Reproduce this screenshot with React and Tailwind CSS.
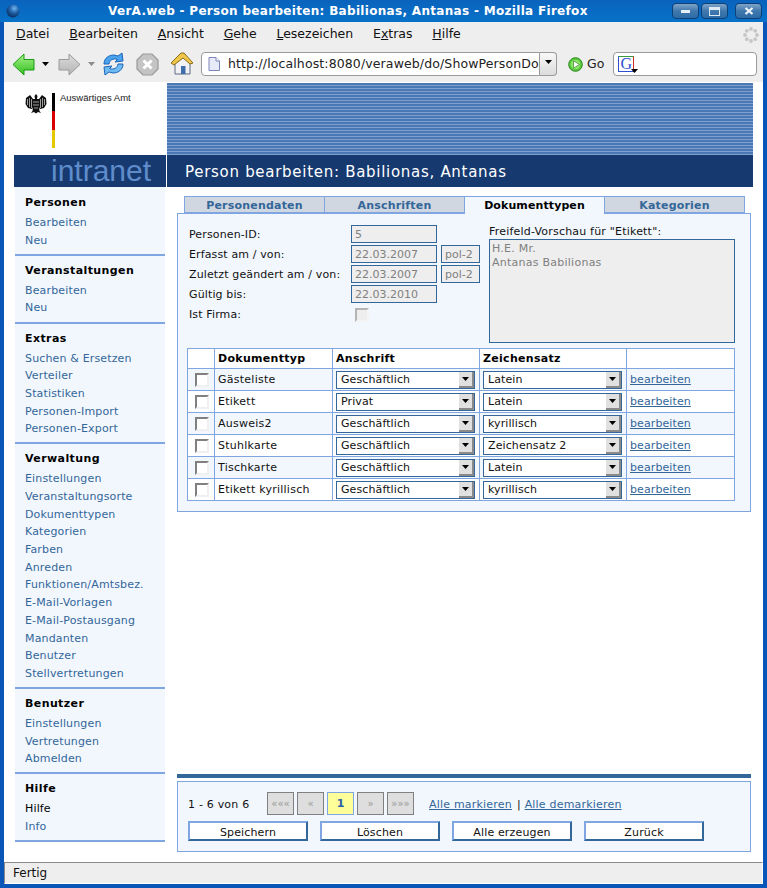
import React from "react";

const FONT = "font-['DejaVu_Sans','Liberation_Sans',sans-serif]";

function Globe() {
  return (
    <svg width="14" height="14" viewBox="0 0 14 14" className="shrink-0">
      <defs>
        <radialGradient id="gl" cx="0.6" cy="0.3" r="0.8">
          <stop offset="0" stopColor="#6fb4f0" />
          <stop offset="0.45" stopColor="#1f5fa8" />
          <stop offset="1" stopColor="#07224a" />
        </radialGradient>
      </defs>
      <circle cx="7" cy="7" r="6.5" fill="url(#gl)" />
    </svg>
  );
}

function WinBtn({ kind, w }) {
  return (
    <div className={`h-[16px] ${w} rounded-[4px] border border-[#0d4079] bg-gradient-to-b from-[#7fa4c8] via-[#3f78ad] to-[#2e6ca6] flex items-center justify-center`}>
      {kind === "min" && <div className="w-[9px] h-[3px] bg-[#e6eef6]" />}
      {kind === "max" && <div className="w-[11px] h-[9px] border border-[#dfe9f3] border-t-[3px]" />}
      {kind === "close" && (
        <svg width="10" height="8" viewBox="0 0 10 8">
          <path d="M1.5 1 L8.5 7 M8.5 1 L1.5 7" stroke="#eef4fa" strokeWidth="2.2" />
        </svg>
      )}
    </div>
  );
}

function Arrow({ dir, id, c1, c2, stroke }) {
  const pts = dir === "left"
    ? "1,11.5 12,1 12,6.5 22,6.5 22,17 12,17 12,22 "
    : "22,11.5 11,1 11,6.5 1,6.5 1,17 11,17 11,22";
  return (
    <svg width="23" height="23" viewBox="0 0 23 23" className="shrink-0">
      <defs>
        <linearGradient id={id} x1="0" y1="0" x2="0" y2="1">
          <stop offset="0" stopColor={c1} />
          <stop offset="1" stopColor={c2} />
        </linearGradient>
      </defs>
      <polygon points={pts} fill={`url(#${id})`} stroke={stroke} strokeWidth="1" strokeLinejoin="round" />
    </svg>
  );
}

function Tri({ color = "#000" }) {
  return (
    <svg width="7" height="4" viewBox="0 0 7 4" className="shrink-0">
      <polygon points="0,0 7,0 3.5,4" fill={color} />
    </svg>
  );
}

function Reload() {
  return (
    <svg width="23" height="24" viewBox="0 0 23 24" className="shrink-0">
      <path d="M2 12 C2 6 7 3 12 3 L16 4 L20 1 L21 9 L13 10 L15.5 7.5 C11 6 7.5 8 7 12 Z" fill="#4aa3ee" stroke="#1b63b8" strokeWidth="1" strokeLinejoin="round" />
      <path d="M21 12 C21 18 16 21 11 21 L7 20 L3 23 L2 15 L10 14 L7.5 16.5 C12 18 15.5 16 16 12 Z" fill="#6fbcf5" stroke="#1b63b8" strokeWidth="1" strokeLinejoin="round" />
    </svg>
  );
}

function Stop() {
  return (
    <svg width="23" height="23" viewBox="0 0 23 23" className="shrink-0">
      <polygon points="7,1 16,1 22,7 22,16 16,22 7,22 1,16 1,7" fill="#c4c4c4" stroke="#999" strokeWidth="1.2" />
      <path d="M7.5 7.5 L15.5 15.5 M15.5 7.5 L7.5 15.5" stroke="#fff" strokeWidth="3" />
    </svg>
  );
}

function Home() {
  return (
    <svg width="24" height="24" viewBox="0 0 24 24" className="shrink-0">
      <path d="M5 11 L5 22 L20 22 L20 11 L13 5 Z" fill="#f2f2f6" stroke="#5d6a80" strokeWidth="1" />
      <rect x="11" y="14" width="4.5" height="8" fill="#3f6fa8" />
      <path d="M1 11 L11 1 L14 1 L23 11 L20 12 L13 6 L4 13 Z" fill="#eec64a" stroke="#8a6d1a" strokeWidth="1" strokeLinejoin="round" />
    </svg>
  );
}

function PageIcon() {
  return (
    <svg width="12" height="14" viewBox="0 0 12 14" className="shrink-0">
      <path d="M1 .5 H8 L11.5 4 V13.5 H1 Z" fill="#e6e9f8" stroke="#7d86b8" strokeWidth="1" />
      <path d="M8 .5 V4 H11.5" fill="#fff" stroke="#7d86b8" strokeWidth="1" />
    </svg>
  );
}

function GoIcon() {
  return (
    <svg width="15" height="15" viewBox="0 0 15 15" className="shrink-0">
      <circle cx="7.5" cy="7.5" r="6.8" fill="#58c63a" stroke="#2a8a1c" strokeWidth="1" />
      <circle cx="7.5" cy="7.5" r="4.8" fill="#8ee46c" />
      <polygon points="5.5,3.8 11.5,7.5 5.5,11.2" fill="#fff" stroke="#2a8a1c" strokeWidth="0.7" />
    </svg>
  );
}

function Spinner() {
  const dots = [[8, 2], [12.2, 3.8], [14, 8], [12.2, 12.2], [8, 14], [3.8, 12.2], [2, 8], [3.8, 3.8]];
  return (
    <svg width="16" height="16" viewBox="0 0 16 16">
      {dots.map(([x, y], i) => <circle key={i} cx={x} cy={y} r="1.9" fill="#c6c6c6" />)}
    </svg>
  );
}

function Eagle() {
  return (
    <svg width="22" height="21" viewBox="0 0 22 21" className="shrink-0">
      <path d="M11 1 L12.5 3 L12 6 L14 6 L17 2 L21 5 L21.5 11 L19 15 L15 16 L14 14 L14.5 18 L16 20 L13 19 L11 20.5 L9 19 L6 20 L7.5 18 L8 14 L7 16 L3 15 L.5 11 L1 5 L5 2 L8 6 L10 6 L9.5 3 Z" fill="#111" />
      <path d="M2.5 6 V12 M4.5 5 V14 M6.5 6 V15 M15.5 6 V15 M17.5 5 V14 M19.5 6 V12 M8 9 H14 M8 12 H14 M9 15 H13" stroke="#fff" strokeWidth="0.6" />
    </svg>
  );
}

function U({ children }) {
  return <span className="underline">{children}</span>;
}

function Chrome() {
  return (
    <>
      <div className="h-[22px] flex items-center bg-gradient-to-b from-[#0a63bd] to-[#0872c8] shrink-0 relative">
        <div className="ml-[6px]"><Globe /></div>
        <div className="flex-1 ml-[88px] text-white font-bold text-[12px] tracking-[0.31px] leading-[22px] whitespace-nowrap">
          VerA.web - Person bearbeiten: Babilionas, Antanas - Mozilla Firefox
        </div>
        <div className="flex items-center gap-[2px] pr-[5px] shrink-0">
          <WinBtn kind="min" w="w-[27px]" />
          <WinBtn kind="max" w="w-[27px]" />
          <div className="w-[3px]" />
          <WinBtn kind="close" w="w-[27px]" />
        </div>
      </div>
      <div className="mx-[4px] bg-[#eeeeee] shrink-0">
        <div className="h-[23px] flex items-center text-[12.5px] text-[#111] pl-[12px] pr-[4px] gap-[19.8px] whitespace-nowrap relative pt-[2px]">
          <span><U>D</U>atei</span>
          <span><U>B</U>earbeiten</span>
          <span><U>A</U>nsicht</span>
          <span><U>G</U>ehe</span>
          <span><U>L</U>esezeichen</span>
          <span>E<U>x</U>tras</span>
          <span><U>H</U>ilfe</span>
          <div className="ml-auto"><Spinner /></div>
        </div>
        <div className="h-[37px] flex items-center text-[12.5px] text-[#222] pl-[8px] whitespace-nowrap pt-[1px]">
          <Arrow dir="left" id="ag" c1="#a8f08a" c2="#2fc01e" stroke="#1c9a12" />
          <div className="ml-[7px]"><Tri /></div>
          <div className="ml-[9px]"><Arrow dir="right" id="ar" c1="#dcdcdc" c2="#b4b4b4" stroke="#9a9a9a" /></div>
          <div className="ml-[7px]"><Tri color="#8a8a8a" /></div>
          <div className="ml-[7px]"><Reload /></div>
          <div className="ml-[11px]"><Stop /></div>
          <div className="ml-[11px]"><Home /></div>
          <div className="ml-[7px] w-[339px] h-[24px] bg-white border border-[#9a9a9a] rounded-l-[4px] flex items-center pl-[6px] overflow-hidden">
            <PageIcon />
            <span className="ml-[8px] tracking-[0.12px]">http://localhost:8080/veraweb/do/ShowPersonDo</span>
          </div>
          <div className="w-[17px] h-[24px] bg-gradient-to-b from-[#f8f8f8] to-[#dcdcdc] border border-[#9a9a9a] border-l-0 rounded-r-[4px] flex items-center justify-center pb-[4px]"><Tri /></div>
          <div className="ml-[11px]"><GoIcon /></div>
          <span className="ml-[4px]">Go</span>
          <div className="ml-[9px] w-[144px] h-[24px] bg-white border border-[#9a9a9a] rounded-[4px] flex items-center pl-[4px] relative">
            <div className="w-[16px] h-[16px] border border-t-[#3a9a3a] border-l-[#2b4fd0] border-b-[#2b4fd0] border-r-[#d02b2b] flex items-center justify-center font-['Liberation_Serif',serif] text-[16px] leading-none text-[#2b4fd0]">G</div>
            <div className="absolute left-[17px] top-[16px]"><Tri /></div>
          </div>
        </div>
      </div>
    </>
  );
}

const NAV = [
  { h: "Personen", items: ["Bearbeiten", "Neu"] },
  { h: "Veranstaltungen", items: ["Bearbeiten", "Neu"] },
  { h: "Extras", items: ["Suchen & Ersetzen", "Verteiler", "Statistiken", "Personen-Import", "Personen-Export"] },
  { h: "Verwaltung", items: ["Einstellungen", "Veranstaltungsorte", "Dokumenttypen", "Kategorien", "Farben", "Anreden", "Funktionen/Amtsbez.", "E-Mail-Vorlagen", "E-Mail-Postausgang", "Mandanten", "Benutzer", "Stellvertretungen"] },
  { h: "Benutzer", items: ["Einstellungen", "Vertretungen", "Abmelden"] },
  { h: "Hilfe", items: ["Hilfe", "Info"], black: "Hilfe" },
];

function Sidebar() {
  return (
    <div className="w-[152px] ml-[10px] shrink-0 flex flex-col">
      <div className="h-[73px] bg-white flex items-start pl-[11px] pt-[11px]">
        <Eagle />
        <div className="ml-[5px] w-[3px] h-[55px] flex flex-col">
          <div className="flex-1 bg-black" />
          <div className="flex-1 bg-[#d80000]" />
          <div className="flex-1 bg-[#e6c800]" />
        </div>
        <div className="ml-[5px] font-['Liberation_Sans',sans-serif] text-[9.5px] leading-[10px] text-[#222] whitespace-nowrap">Auswärtiges Amt</div>
      </div>
      <div className="h-[32px] bg-[#163a70] flex items-center pl-[37px] text-[#5f8ccb] font-['Liberation_Sans',sans-serif] text-[30px] leading-none whitespace-nowrap">intranet</div>
      <div className="ml-[1px] mr-[1px] bg-[#f2f7fe] flex flex-col">
        {NAV.map((s, i) => (
          <div key={i} className={`border-b-2 border-[#7fa6e0] pb-[4.4px] ${i === 0 ? "pt-[8px]" : "pt-[7px]"}`}>
            <div className="h-[16px] leading-[16px] pl-[10px] text-[11px] font-bold text-black tracking-[0.4px]">{s.h}</div>
            <div className="mt-[3px]">
              {s.items.map((t) => (
                <div key={t} className={`h-[17.7px] leading-[17.7px] pl-[10px] text-[11px] tracking-[0.15px] ${s.black === t ? "text-black" : "text-[#336699]"}`}>{t}</div>
              ))}
            </div>
          </div>
        ))}
      </div>
    </div>
  );
}

function Tab({ label, active, w }) {
  if (active) {
    return (
      <div className={`${w} h-[18px] bg-[#f2f7fe] border-t border-[#7fa6e0] text-center text-[11px] font-bold text-black leading-[18px] tracking-[0.1px] relative z-10`}>{label}</div>
    );
  }
  return (
    <div className={`${w} h-[17px] bg-[#d1d7e0] border border-[#7fa6e0] text-center text-[11px] font-bold text-[#336699] leading-[17px] tracking-[0.2px]`}>{label}</div>
  );
}

function Field({ v, w }) {
  return (
    <div className={`${w} h-[18px] bg-[#eeeeee] border border-[#336699] pl-[3px] text-[11px] leading-[17px] text-[#808080]`}>{v}</div>
  );
}

function FormRow({ label, children }) {
  return (
    <div className="h-[20px] flex items-start">
      <div className="w-[164px] pl-[2px] text-[11px] leading-[20px] text-[#111] tracking-[0.13px] whitespace-nowrap">{label}</div>
      <div className="flex gap-[4px]">{children}</div>
    </div>
  );
}

function Check({ disabled }) {
  return (
    <div className={`w-[14px] h-[14px] border-2 ${disabled ? "border-t-[#b4b4b4] border-l-[#b4b4b4] border-b-[#f4f4f4] border-r-[#f4f4f4] bg-[#eeeeee]" : "border-t-[#808080] border-l-[#808080] border-b-[#f0f0f0] border-r-[#f0f0f0] bg-white"}`} />
  );
}

function Select({ v }) {
  return (
    <div className="w-[139px] h-[18px] bg-white border border-[#336699] flex items-stretch">
      <div className="flex-1 pl-[4px] text-[11px] leading-[16px] text-[#111] tracking-[0.1px]">{v}</div>
      <div className="w-[15px] bg-[#e0e0e0] border-r-2 border-b-2 border-[#8a8a8a] flex items-center justify-center">
        <Tri />
      </div>
    </div>
  );
}

const ROWS = [
  ["Gästeliste", "Geschäftlich", "Latein"],
  ["Etikett", "Privat", "Latein"],
  ["Ausweis2", "Geschäftlich", "kyrillisch"],
  ["Stuhlkarte", "Geschäftlich", "Zeichensatz 2"],
  ["Tischkarte", "Geschäftlich", "Latein"],
  ["Etikett kyrillisch", "Geschäftlich", "kyrillisch"],
];

const TD = "border border-[#7fa6e0] p-0 text-[11px] text-[#111]";

function DocTable() {
  return (
    <table className="border-collapse table-fixed w-[548px]">
      <colgroup>
        <col className="w-[27px]" />
        <col className="w-[118px]" />
        <col className="w-[147px]" />
        <col className="w-[147px]" />
        <col className="w-[108px]" />
      </colgroup>
      <thead>
        <tr className="h-[20px] bg-white">
          <th className={TD}></th>
          <th className={`${TD} text-left pl-[3px] pt-[2px] font-bold text-black tracking-[0.3px]`}>Dokumenttyp</th>
          <th className={`${TD} text-left pl-[3px] pt-[2px] font-bold text-black tracking-[0.3px]`}>Anschrift</th>
          <th className={`${TD} text-left pl-[3px] pt-[2px] font-bold text-black tracking-[0.3px]`}>Zeichensatz</th>
          <th className={TD}></th>
        </tr>
      </thead>
      <tbody>
        {ROWS.map((r, i) => (
          <tr key={i} className={`h-[22px] ${i % 2 === 0 ? "bg-[#f2f7fe]" : "bg-white"}`}>
            <td className={TD}><div className="flex justify-center pl-[2px]"><Check /></div></td>
            <td className={`${TD} pl-[3px] pt-[2px] tracking-[0.25px] whitespace-nowrap`}>{r[0]}</td>
            <td className={`${TD} pl-[3px]`}><Select v={r[1]} /></td>
            <td className={`${TD} pl-[3px]`}><Select v={r[2]} /></td>
            <td className={`${TD} pl-[3px] pt-[2px] text-[#336699] tracking-[0.1px]`}><span className="underline">bearbeiten</span></td>
          </tr>
        ))}
      </tbody>
    </table>
  );
}

function PageBtn({ t, active }) {
  return (
    <div className={`w-[27px] h-[23px] border flex items-center justify-center text-[10px] leading-none ${active ? "bg-[#ffff99] border-[#7fa6e0] text-[#2f5fa8] font-bold text-[11px]" : "bg-[#dedede] border-[#808080] text-[#999]"}`}>{t}</div>
  );
}

function ActBtn({ t }) {
  return (
    <div className="w-[120px] h-[20px] bg-white border-2 border-t-[#7fa6e0] border-l-[#7fa6e0] border-b-[#336699] border-r-[#336699] text-center text-[11px] leading-[19px] text-[#111] tracking-[0.15px]">{t}</div>
  );
}

function Main() {
  return (
    <div className="flex-1 ml-[1px] flex flex-col min-w-0">
      <div className="w-[586px] h-[73px] mt-[1px] -mb-[1px] bg-[repeating-linear-gradient(to_bottom,#4a78b4_0px,#4a78b4_2px,#7f9fcf_2px,#7f9fcf_3px)]" />
      <div className="w-[586px] h-[32px] bg-[#163a70] flex items-center pl-[18px] pt-[2px] text-white text-[15px] tracking-[0.71px] whitespace-nowrap">Person bearbeiten: Babilionas, Antanas</div>

      <div className="pl-[10px] w-[584px] mt-[9px] flex-1 flex flex-col">
        <div className="flex pl-[7px] items-start h-[17px]">
          <Tab label="Personendaten" w="w-[141px]" />
          <div className="-ml-[1px]"><Tab label="Anschriften" w="w-[141px]" /></div>
          <div className="-ml-[1px] border-x border-transparent"><Tab label="Dokumenttypen" active w="w-[139px]" /></div>
          <div className="-ml-[1px]"><Tab label="Kategorien" w="w-[141px]" /></div>
        </div>
        <div className="h-[299px] bg-[#f2f7fe] border border-[#7fa6e0] pl-[9px] pt-[11px]">
          <div className="h-[123px] flex">
            <div className="w-[302px] shrink-0">
              <FormRow label="Personen-ID:"><Field v="5" w="w-[86px]" /></FormRow>
              <FormRow label="Erfasst am / von:"><Field v="22.03.2007" w="w-[86px]" /><Field v="pol-2" w="w-[39px]" /></FormRow>
              <FormRow label="Zuletzt geändert am / von:"><Field v="22.03.2007" w="w-[86px]" /><Field v="pol-2" w="w-[39px]" /></FormRow>
              <FormRow label="Gültig bis:"><Field v="22.03.2010" w="w-[86px]" /></FormRow>
              <FormRow label="Ist Firma:"><div className="ml-[4px] mt-[3px]"><Check disabled /></div></FormRow>
            </div>
            <div className="w-[246px] shrink-0">
              <div className="h-[14px] text-[11px] leading-[14px] text-[#111] tracking-[0.2px] whitespace-nowrap">Freifeld-Vorschau für "Etikett":</div>
              <div className="h-[104px] bg-[#eeeeee] border border-[#336699] pl-[2px] pt-[2px] text-[11px] leading-[14px] text-[#808080] tracking-[0.25px]">
                <div>H.E. Mr.</div>
                <div>Antanas Babilionas</div>
              </div>
            </div>
          </div>
          <DocTable />
        </div>

        <div className="mt-auto w-[574px] h-[4px] bg-[#336699]" />
        <div className="mt-[3px] mb-[10px] w-[574px] h-[71px] bg-[#f2f7fe] border border-[#7fa6e0] pl-[10px] pt-[10px]">
          <div className="flex items-center h-[23px] text-[11px] text-[#111]">
            <span className="w-[79px] pt-[3px] tracking-[0.2px]">1 - 6 von 6</span>
            <div className="flex gap-[3px]">
              <PageBtn t="«««" />
              <PageBtn t="«" />
              <PageBtn t="1" active />
              <PageBtn t="»" />
              <PageBtn t="»»»" />
            </div>
            <span className="ml-[15px] mt-[3px] underline text-[#336699] tracking-[0.2px]">Alle markieren</span>
            <span className="mx-[5px] mt-[3px]">|</span>
            <span className="-ml-[1px] mt-[3px] underline text-[#336699] tracking-[0.2px]">Alle demarkieren</span>
          </div>
          <div className="flex gap-[12px] mt-[6px]">
            <ActBtn t="Speichern" />
            <ActBtn t="Löschen" />
            <ActBtn t="Alle erzeugen" />
            <ActBtn t="Zurück" />
          </div>
        </div>
      </div>
    </div>
  );
}

export default function App() {
  return (
    <div className={`${FONT} w-[767px] h-[888px] bg-[#0a55b8] flex flex-col overflow-hidden`}>
      <Chrome />
      <div className="mx-[4px] flex-1 bg-white flex min-h-0">
        <Sidebar />
        <Main />
      </div>
      <div className="mx-[4px] h-[22px] bg-[#eeeeee] border border-t-[#8a8a8a] border-l-[#8a8a8a] border-r-[#fff] border-b-[#fff] pl-[8px] text-[12px] leading-[20px] text-[#111] shrink-0 mb-[4px]">Fertig</div>
    </div>
  );
}
